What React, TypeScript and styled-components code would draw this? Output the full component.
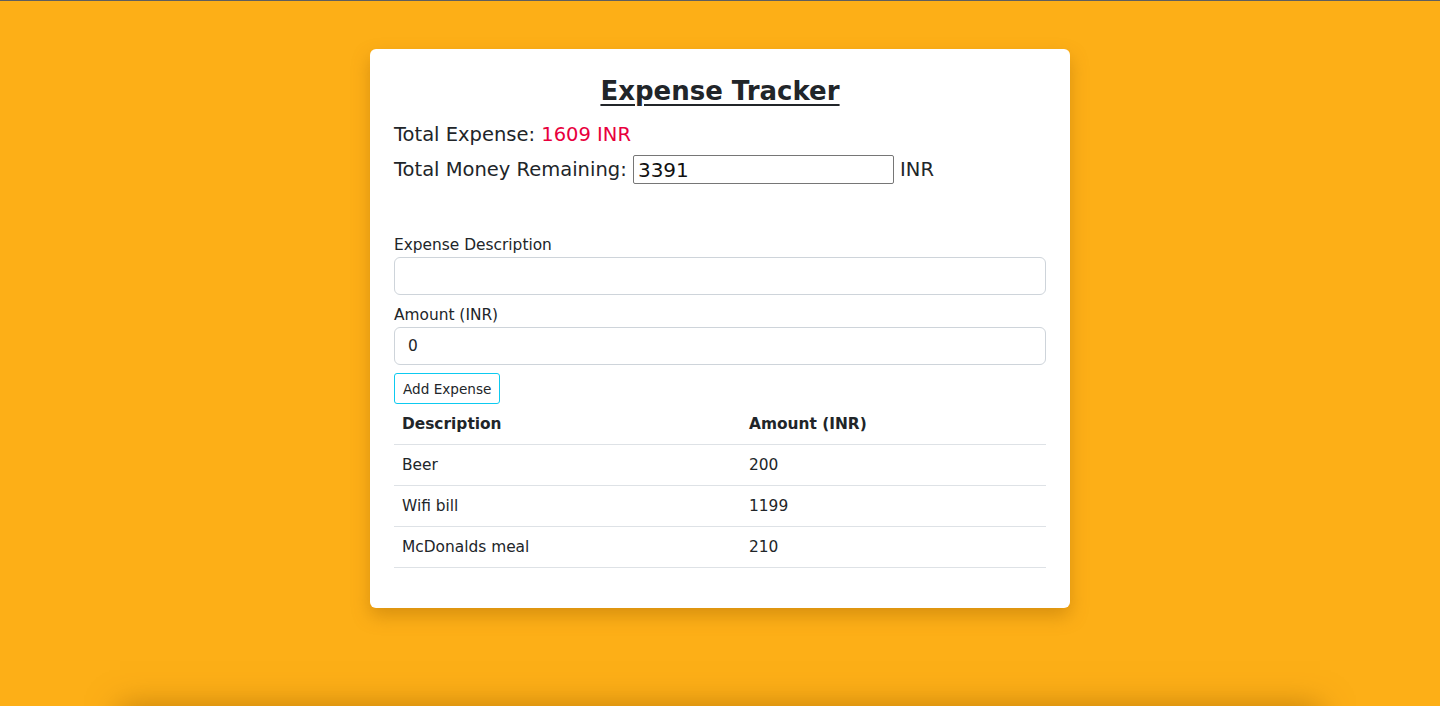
import React, { useState } from 'react';
import styled, { createGlobalStyle } from 'styled-components';

const expenses = [
    { id: 1, description: 'Beer', amount: 200 },
    { id: 2, description: 'Wifi bill', amount: 1199 },
    { id: 3, description: 'McDonalds meal', amount: 210 },
];

const GlobalStyle = createGlobalStyle`
    html, body {
        margin: 0;
        padding: 0;
    }
    body {
        background: #fdaf17;
        border-top: 1px solid #5f5f5f;
        font-family: 'DejaVu Sans', 'Noto Sans', sans-serif;
        color: #212529;
        overflow: hidden;
    }
`;

export default function App() {
    const [description, setDescription] = useState('');
    const [amount, setAmount] = useState('0');
    const total = expenses.reduce((sum, e) => sum + e.amount, 0);

    return (
        <>
            <GlobalStyle />
            <Page>
                <Card>
                    <Title>Expense Tracker</Title>
                    <Summaries>
                        <Summary>
                            Total Expense: <Spent>{total} INR</Spent>
                        </Summary>
                        <Summary>
                            Total Money Remaining: <BudgetInput defaultValue="3391" /> INR
                        </Summary>
                    </Summaries>

                    <Form>
                        <Label>Expense Description</Label>
                        <Field value={description} onChange={(e) => setDescription(e.target.value)} />
                        <Label>Amount (INR)</Label>
                        <Field value={amount} onChange={(e) => setAmount(e.target.value)} />
                        <AddButton type="button">Add Expense</AddButton>
                    </Form>

                    <Table>
                        <thead>
                            <tr>
                                <Th>Description</Th>
                                <Th>Amount (INR)</Th>
                            </tr>
                        </thead>
                        <tbody>
                            {expenses.map((e) => (
                                <tr key={e.id}>
                                    <Td>{e.description}</Td>
                                    <Td>{e.amount}</Td>
                                </tr>
                            ))}
                        </tbody>
                    </Table>
                </Card>
                <NextSection />
            </Page>
        </>
    );
}

const Page = styled.div`
    display: flex;
    flex-direction: column;
    align-items: center;
    padding-top: 48px;
`;

const Card = styled.div`
    width: 700px;
    box-sizing: border-box;
    background: #fff;
    border-radius: 6px;
    padding: 24px;
    box-shadow: 0 8px 18px rgba(150, 90, 0, 0.35);
`;

const Title = styled.h1`
    margin: 0 0 14px;
    text-align: center;
    font-size: 26px;
    font-weight: 700;
    line-height: 36px;
    text-decoration: underline;
    text-underline-offset: 4px;
    text-decoration-thickness: 2px;
`;

const Summaries = styled.div`
    display: flex;
    flex-direction: column;
    gap: 8px;
`;

const Summary = styled.div`
    font-size: 19.5px;
    line-height: 24px;
    min-height: 24px;
    display: flex;
    align-items: center;
    white-space: pre;
`;

const Spent = styled.span`
    color: #e8003d;
`;

const BudgetInput = styled.input`
    width: 261px;
    height: 29px;
    box-sizing: border-box;
    border: 1px solid #767676;
    border-radius: 2px;
    padding: 0 4px;
    font-family: inherit;
    font-size: 20px;
    color: #111;
`;

const Form = styled.div`
    display: flex;
    flex-direction: column;
    align-items: flex-start;
    margin-top: 51px;
`;

const Label = styled.label`
    font-size: 15.4px;
    line-height: 20px;
    margin-bottom: 2px;
`;

const Field = styled.input`
    width: 100%;
    height: 38px;
    box-sizing: border-box;
    border: 1px solid #ced4da;
    border-radius: 6px;
    padding: 0 13px;
    font-family: inherit;
    font-size: 15.4px;
    color: #212529;
    margin-bottom: 10px;
    outline: none;
`;

const AddButton = styled.button`
    margin-top: -2px;
    height: 31px;
    padding: 0 8px;
    background: #fff;
    border: 1px solid #0dcaf0;
    border-radius: 3px;
    font-family: inherit;
    font-size: 13.6px;
    color: #212529;
`;

const Table = styled.table`
    width: 100%;
    border-collapse: collapse;
    margin-bottom: 16px;
    font-size: 15.4px;
`;

const Th = styled.th`
    text-align: left;
    font-weight: 700;
    padding: 0 8px;
    height: 40px;
    border-bottom: 1px solid #dee2e6;
    &:first-child {
        width: 331px;
    }
`;

const Td = styled.td`
    padding: 0 8px;
    height: 40px;
    border-bottom: 1px solid #dee2e6;
`;

const NextSection = styled.div`
    margin-top: 104px;
    width: 1200px;
    height: 200px;
    background: #fdaf17;
    box-shadow: 0 -6px 30px rgba(150, 90, 0, 0.55);
`;
